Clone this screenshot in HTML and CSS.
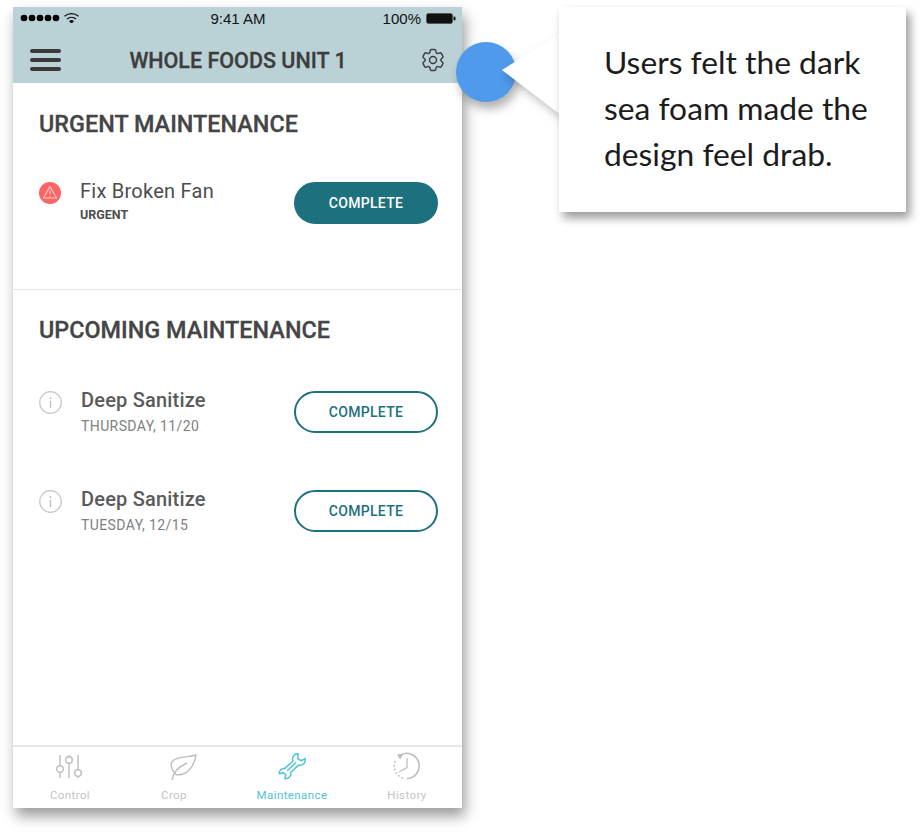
FILE: index.html
```html
<!DOCTYPE html>
<html lang="en">
<head>
    <meta charset="UTF-8">
    <meta name="viewport" content="width=device-width, initial-scale=1.0">
    <title>Maintenance</title>
    <link rel="stylesheet" href="styles.css">
</head>
<body>
    <div class="page">
        <div class="phone">
            <div class="top">
                <div class="status">
                    <div class="status-left">
                        <svg width="60" height="10" viewBox="0 0 60 10">
                            <circle cx="4" cy="5" r="3.3"/><circle cx="12" cy="5" r="3.3"/><circle cx="20" cy="5" r="3.3"/><circle cx="28" cy="5" r="3.3"/><circle cx="36" cy="5" r="3.3"/>
                            <path d="M44.5 3.2a11 11 0 0 1 14 0M47 6a7 7 0 0 1 9 0" fill="none" stroke="#111" stroke-width="1.3"/>
                            <path d="M49 8.2a3.6 3.6 0 0 1 5 0l-2.5 2.4z" fill="#111"/>
                        </svg>
                    </div>
                    <span class="clock">9:41 AM</span>
                    <div class="status-right">
                        <span>100%</span>
                        <svg width="30" height="11" viewBox="0 0 30 11">
                            <rect x="0.5" y="0.5" width="26" height="10" rx="2" fill="#111" stroke="#555"/>
                            <rect x="27.5" y="3.5" width="2" height="4" rx="1" fill="#111"/>
                        </svg>
                    </div>
                </div>
                <div class="header">
                    <div class="burger"><i></i><i></i><i></i></div>
                    <h1>WHOLE FOODS UNIT 1</h1>
                    <svg class="gear" width="28" height="28" viewBox="0 0 24 24" fill="none" stroke="#3d3d3d" stroke-width="1.25">
                        <path d="M9.594 3.94c.09-.542.56-.94 1.11-.94h2.593c.55 0 1.02.398 1.11.94l.213 1.281c.063.374.313.686.645.87.074.04.147.083.22.127.325.196.72.257 1.075.124l1.217-.456a1.125 1.125 0 0 1 1.37.49l1.296 2.247a1.125 1.125 0 0 1-.26 1.431l-1.003.827c-.293.241-.438.613-.43.992a7.723 7.723 0 0 1 0 .255c-.008.378.137.75.43.991l1.004.827c.424.35.534.955.26 1.43l-1.298 2.247a1.125 1.125 0 0 1-1.369.491l-1.217-.456c-.355-.133-.75-.072-1.076.124a6.47 6.47 0 0 1-.22.128c-.331.183-.581.495-.644.869l-.213 1.281c-.09.543-.56.94-1.11.94h-2.594c-.55 0-1.019-.398-1.11-.94l-.213-1.281c-.062-.374-.312-.686-.644-.87a6.52 6.52 0 0 1-.22-.127c-.325-.196-.72-.257-1.076-.124l-1.217.456a1.125 1.125 0 0 1-1.369-.49l-1.297-2.247a1.125 1.125 0 0 1 .26-1.431l1.004-.827c.292-.24.437-.613.43-.991a6.932 6.932 0 0 1 0-.255c.007-.38-.138-.751-.43-.992l-1.004-.827a1.125 1.125 0 0 1-.26-1.43l1.297-2.247a1.125 1.125 0 0 1 1.37-.491l1.216.456c.356.133.751.072 1.076-.124.072-.044.146-.086.22-.128.332-.183.582-.495.644-.869l.214-1.28Z"/>
                        <circle cx="12" cy="12" r="3"/>
                    </svg>
                </div>
            </div>

            <div class="content">
                <section class="section urgent">
                    <h2>URGENT MAINTENANCE</h2>
                    <div class="task">
                        <svg class="task-icon" width="22" height="22" viewBox="0 0 22 22">
                            <circle cx="11" cy="11" r="11" fill="#fd6464"/>
                            <path d="M11 4.500L17.500 16H4.500Z" fill="none" stroke="#ffd0d0" stroke-width="1.1" stroke-linejoin="round"/>
                            <path d="M11 8.500v4M11 13.600v1" stroke="#ffd0d0" stroke-width="1.1"/>
                        </svg>
                        <div class="task-text">
                            <div class="task-name">Fix Broken Fan</div>
                            <div class="task-sub strong">URGENT</div>
                        </div>
                        <button class="btn solid">COMPLETE</button>
                    </div>
                </section>

                <section class="section upcoming">
                    <h2>UPCOMING MAINTENANCE</h2>
                    <div class="task">
                        <svg class="task-icon" width="23" height="23" viewBox="0 0 23 23">
                            <circle cx="11.5" cy="11.5" r="10.8" fill="none" stroke="#c6c6c6" stroke-width="1.2"/>
                            <path d="M11.5 10v7M11.5 6v2" stroke="#bdbdbd" stroke-width="1.3"/>
                        </svg>
                        <div class="task-text">
                            <div class="task-name">Deep Sanitize</div>
                            <div class="task-sub">THURSDAY, 11/20</div>
                        </div>
                        <button class="btn">COMPLETE</button>
                    </div>
                    <div class="task">
                        <svg class="task-icon" width="23" height="23" viewBox="0 0 23 23">
                            <circle cx="11.5" cy="11.5" r="10.8" fill="none" stroke="#c6c6c6" stroke-width="1.2"/>
                            <path d="M11.5 10v7M11.5 6v2" stroke="#bdbdbd" stroke-width="1.3"/>
                        </svg>
                        <div class="task-text">
                            <div class="task-name">Deep Sanitize</div>
                            <div class="task-sub">TUESDAY, 12/15</div>
                        </div>
                        <button class="btn">COMPLETE</button>
                    </div>
                </section>
            </div>

            <div class="tabs">
                <div class="tab">
                    <svg width="28" height="28" viewBox="0 0 28 28" fill="none" stroke="#bdbdbd" stroke-width="1.4">
                        <path d="M4 3v10.700M4 20.300V26M13 3v1.700M13 11.300V26M22 3v14.700M22 24.300V26"/>
                        <circle cx="4" cy="17" r="3.3"/><circle cx="13" cy="8" r="3.3"/><circle cx="22" cy="21" r="3.3"/>
                    </svg>
                    <span>Control</span>
                </div>
                <div class="tab">
                    <svg class="leaf" width="28" height="28" viewBox="0 0 28 28" fill="none" stroke="#bdbdbd" stroke-width="1.4" stroke-linejoin="round">
                        <path d="M27 3C20 5.500 5 4 2.500 11C1.500 15 4 20 7 22.500C17 24 25 16 27 3Z"/>
                        <path d="M3 28C4 21 9 15 18 11"/>
                    </svg>
                    <span>Crop</span>
                </div>
                <div class="tab active">
                    <svg width="32" height="32" viewBox="0 0 32 32" fill="none" stroke="#4ec3d8" stroke-width="1.7" stroke-linejoin="round">
                        <path d="M23 2C18.500 1.500 15.500 6 17 10.500L7.500 19C4 18.500 1 21.500 1.500 25L6 23.500L9 26L8 30.500C12 31 15.500 27.500 14.500 23.500L23.500 15C28 16 32 12.500 31 7.500L26.500 10L22.500 7.500Z"/>
                        <path d="M10.500 21.500L20.500 12"/>
                    </svg>
                    <span>Maintenance</span>
                </div>
                <div class="tab">
                    <svg width="28" height="28" viewBox="0 0 28 28" fill="none" stroke="#bdbdbd" stroke-width="1.6">
                        <path d="M10 1.800A12.700 12.700 0 1 1 14 26.700"/>
                        <path d="M10 26A12.700 12.700 0 0 1 2.500 8.500" stroke-dasharray="1.6 2.200"/>
                        <path d="M14 6V15.500L6 20" stroke-width="1.3"/>
                        <path d="M4 2.500L11 1.500L7 7.500Z" fill="#bdbdbd" stroke="none"/>
                    </svg>
                    <span>History</span>
                </div>
            </div>
        </div>

        <!-- annotation on top of the phone -->
        <div class="note">
            <div class="marker"></div>
            <svg class="pointer" width="62" height="84" viewBox="0 0 62 84">
                <polygon points="2,38 62,0 62,84"/>
            </svg>
            <div class="note-card">Users felt the dark<br>sea foam made the<br>design feel drab.</div>
        </div>
    </div>
</body>
</html>
```

FILE: styles.css
```css
* {
    box-sizing: border-box;
}
body {
    margin: 0;
    background: #fff;
    font-family: "Roboto", "Liberation Sans", sans-serif;
}
.page {
    position: relative;
    width: 924px;
    height: 835px;
    padding: 7px 0 0 13px;
    overflow: hidden;
}
.phone {
    display: flex;
    flex-direction: column;
    width: 449px;
    height: 801px;
    background: #fff;
    box-shadow: 3px 8px 13px rgba(0, 0, 0, 0.4);
}

/* top bar */
.top {
    height: 76px;
    background: #bad1d6;
}
.status {
    display: flex;
    justify-content: space-between;
    align-items: center;
    height: 22px;
    padding: 0 6px 0 7px;
    font-family: "Liberation Sans", sans-serif;
    font-size: 15px;
    color: #111;
}
.status-left,
.status-right {
    display: flex;
    align-items: center;
    gap: 5px;
    width: 80px;
}
.status-right {
    justify-content: flex-end;
}
.header {
    display: flex;
    justify-content: space-between;
    align-items: center;
    height: 54px;
    padding: 8px 16px 0 17px;
}
.burger {
    display: flex;
    flex-direction: column;
    gap: 5px;
    width: 31px;
}
.burger i {
    display: block;
    height: 4px;
    border-radius: 2px;
    background: #3a3a3a;
}
.header h1 {
    margin: 0;
    padding-right: 4px;
    font-size: 21.5px;
    font-weight: 500;
    -webkit-text-stroke: 0.3px #3d3d3d;
    color: #3d3d3d;
}
.gear {
    margin-right: -1px;
}

/* lists */
.content {
    flex: 1;
}
.section {
    padding: 0 24px 0 26px;
}
.urgent {
    height: 207px;
    padding-top: 26px;
    border-bottom: 1px solid #e6e6e6;
}
.upcoming {
    padding-top: 25px;
}
.section h2 {
    margin: 0 0 43px;
    font-size: 23.4px;
    line-height: 30px;
    font-weight: 500;
    -webkit-text-stroke: 0.3px #454545;
    color: #454545;
}
.upcoming h2 {
    margin-bottom: 46px;
}
.task {
    display: flex;
    align-items: flex-start;
    gap: 19px;
    height: 42px;
    margin-bottom: 56.5px;
}
.task-text {
    flex: 1;
}
.task-name {
    height: 20px;
    margin-top: -1px;
    font-size: 20px;
    line-height: 20px;
    font-weight: 500;
    letter-spacing: 0.2px;
    color: #5a5a5a;
}
.urgent .task-name {
    font-weight: 400;
    letter-spacing: 0.25px;
    color: #4d4d4d;
}
.task-sub {
    margin-top: 8px;
    font-size: 14px;
    line-height: 16px;
    letter-spacing: 0.4px;
    color: #808080;
}
.urgent .task-sub {
    margin-top: 6px;
}
.task-sub.strong {
    font-size: 12.5px;
    font-weight: 700;
    letter-spacing: 0;
    color: #4d4d4d;
}
.btn {
    width: 144px;
    height: 42px;
    padding: 0;
    border: 2px solid #1d717f;
    border-radius: 21px;
    background: #fff;
    font-family: inherit;
    font-size: 14px;
    font-weight: 500;
    letter-spacing: 0.3px;
    color: #1d717f;
}
.btn.solid {
    background: #1d717f;
    color: #fff;
}

/* bottom tabs */
.tabs {
    display: grid;
    grid-template-columns: 114px 94px 142px 88px;
    height: 63px;
    border-top: 2px solid #e6e6e6;
}
.tab {
    display: flex;
    flex-direction: column;
    align-items: center;
    padding-top: 5px;
    font-size: 11.5px;
    letter-spacing: 0.4px;
    color: #c4c4c4;
}
.tab svg {
    height: 28px;
    margin-bottom: 8px;
}
.tab .leaf {
    margin-left: 18px;
}
.tab.active {
    color: #4ec3d8;
}

/* annotation */
.note {
    position: absolute;
    top: 7px;
    left: 456px;
    width: 450px;
    height: 205px;
}
.marker {
    position: absolute;
    top: 35px;
    left: 0;
    width: 60px;
    height: 60px;
    border-radius: 50%;
    background: #4f9aea;
    box-shadow: 3px 7px 10px rgba(0, 0, 0, 0.3);
}
.pointer {
    position: absolute;
    top: 25px;
    left: 44px;
    overflow: visible;
    fill: #fff;
    filter: drop-shadow(3px 5px 5px rgba(0, 0, 0, 0.25));
}
.note-card {
    position: absolute;
    top: 0;
    left: 103px;
    width: 347px;
    height: 205px;
    padding: 32px 20px 0 45px;
    background: #fff;
    box-shadow: 4px 6px 9px rgba(0, 0, 0, 0.4);
    font-family: "Lato", sans-serif;
    font-size: 31.8px;
    line-height: 46px;
    color: #1c1c1c;
}
```
